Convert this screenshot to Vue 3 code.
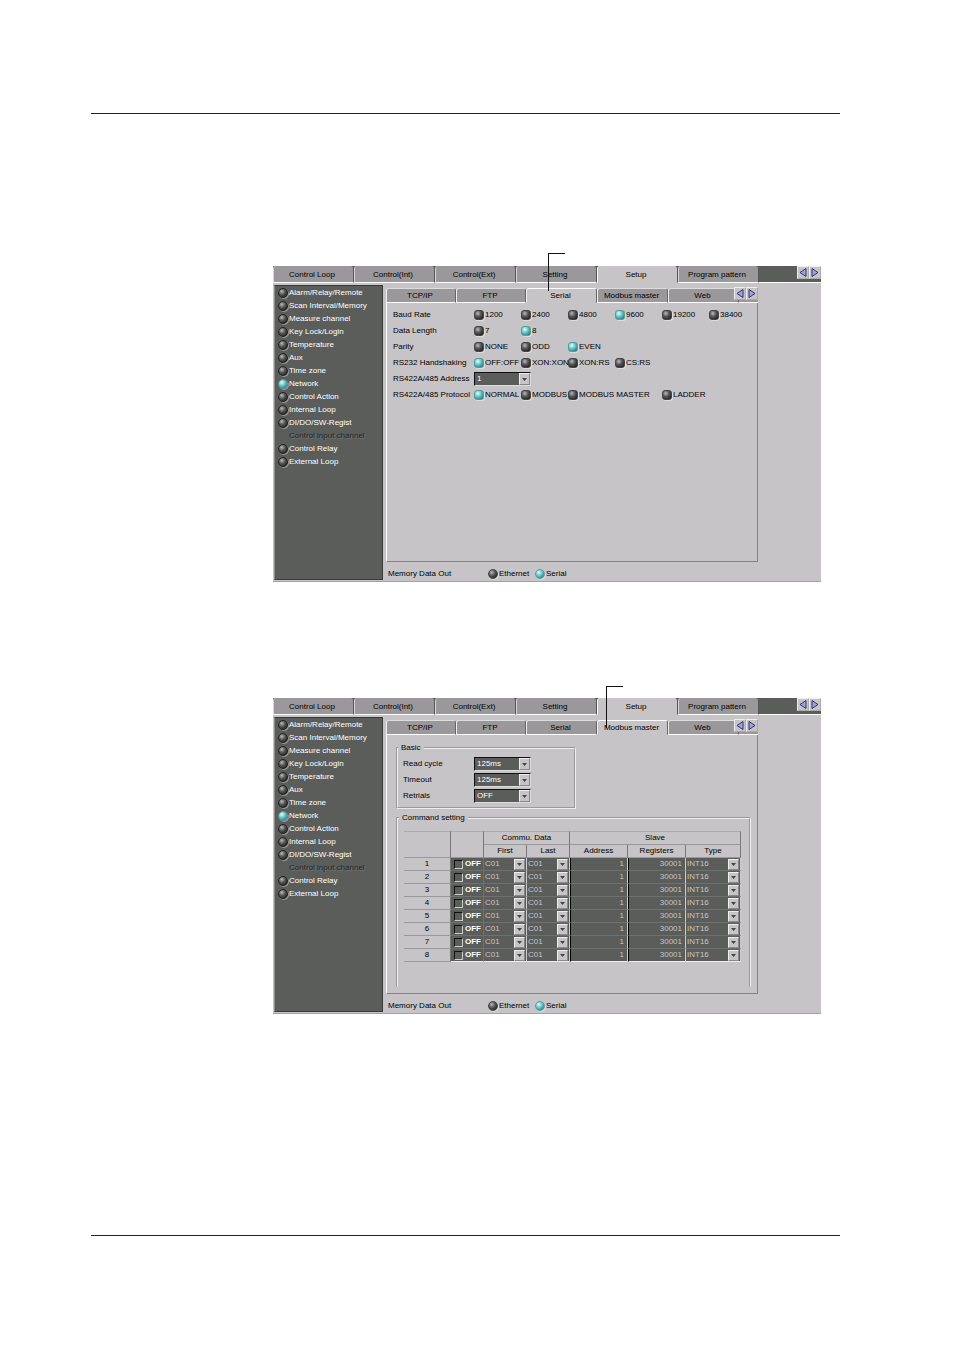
<script setup>
import { reactive } from 'vue';

const mainTabs = ['Control Loop', 'Control(Int)', 'Control(Ext)', 'Setting', 'Setup', 'Program pattern'];
const subTabs = ['TCP/IP', 'FTP', 'Serial', 'Modbus master', 'Web'];

const menu = [
  'Alarm/Relay/Remote',
  'Scan Interval/Memory',
  'Measure channel',
  'Key Lock/Login',
  'Temperature',
  'Aux',
  'Time zone',
  'Network',
  'Control Action',
  'Internal Loop',
  'DI/DO/SW-Regist',
  'Control input channel',
  'Control Relay',
  'External Loop',
];
const disabledItem = 'Control input channel';

const serialRows = [
  { key: 'baud', label: 'Baud Rate', options: ['1200', '2400', '4800', '9600', '19200', '38400'] },
  { key: 'length', label: 'Data Length', options: ['7', '8'] },
  { key: 'parity', label: 'Parity', options: ['NONE', 'ODD', 'EVEN'] },
  { key: 'handshake', label: 'RS232 Handshaking', options: ['OFF:OFF', 'XON:XON', 'XON:RS', 'CS:RS'] },
  { key: 'address', label: 'RS422A/485 Address', select: ['1', '2', '3', '4'] },
  { key: 'protocol', label: 'RS422A/485 Protocol', options: ['NORMAL', 'MODBUS', 'MODBUS MASTER', 'LADDER'] },
];

const serial = reactive({
  baud: '9600',
  length: '8',
  parity: 'EVEN',
  handshake: 'OFF:OFF',
  address: '1',
  protocol: 'NORMAL',
});

const basicRows = [
  { key: 'cycle', label: 'Read cycle', options: ['125ms', '250ms', '500ms'] },
  { key: 'timeout', label: 'Timeout', options: ['125ms', '250ms', '500ms'] },
  { key: 'retrials', label: 'Retrials', options: ['OFF', '1', '2'] },
];
const basic = reactive({ cycle: '125ms', timeout: '125ms', retrials: 'OFF' });

const commands = reactive(
  Array.from({ length: 8 }, (_, i) => ({
    no: i + 1, on: false, first: 'C01', last: 'C01', address: 1, register: 30001, type: 'INT16',
  }))
);

const screens = reactive([
  { id: 'a', tab: 'Setup', sub: 'Serial', item: 'Network', out: 'Serial' },
  { id: 'b', tab: 'Setup', sub: 'Modbus master', item: 'Network', out: 'Serial' },
]);
</script>

<template>
  <div class="page">
    <hr class="rule" />

    <main class="figures">
      <section v-for="s in screens" :key="s.id" class="window">
        <div class="callout" :class="'callout-' + s.id"></div>

        <nav class="main-tabs">
          <button
            v-for="t in mainTabs"
            :key="t"
            class="main-tab"
            :class="{ active: t === s.tab }"
            @click="s.tab = t"
          >{{ t }}</button>
          <div class="tabs-rest">
            <button class="arrow" aria-label="Previous">
              <svg viewBox="0 0 10 11"><path d="M8 1.5v8L2 5.5z" /></svg>
            </button>
            <button class="arrow" aria-label="Next">
              <svg viewBox="0 0 10 11"><path d="M2 1.5v8L8 5.5z" /></svg>
            </button>
          </div>
        </nav>

        <div class="body">
          <aside class="sidebar">
            <label
              v-for="m in menu"
              :key="m"
              class="item"
              :class="{ off: m === disabledItem }"
            >
              <input
                v-model="s.item"
                type="radio"
                class="led round"
                :name="'menu-' + s.id"
                :value="m"
                :disabled="m === disabledItem"
              />
              <span>{{ m }}</span>
            </label>
          </aside>

          <div class="content">
            <nav class="sub-tabs">
              <button
                v-for="t in subTabs"
                :key="t"
                class="sub-tab"
                :class="{ active: t === s.sub }"
                @click="s.sub = t"
              >{{ t }}</button>
              <span class="sub-rest"></span>
              <div class="sub-arrows">
                <button class="arrow" aria-label="Previous">
                  <svg viewBox="0 0 10 11"><path d="M8 1.5v8L2 5.5z" /></svg>
                </button>
                <button class="arrow" aria-label="Next">
                  <svg viewBox="0 0 10 11"><path d="M2 1.5v8L8 5.5z" /></svg>
                </button>
              </div>
            </nav>

            <div class="panel">
              <!-- Serial -->
              <div v-if="s.sub === 'Serial'" class="serial">
                <div v-for="r in serialRows" :key="r.key" class="row">
                  <label v-if="r.select" class="row-label" :for="r.key + s.id">{{ r.label }}</label>
                  <span v-else class="row-label">{{ r.label }}</span>
                  <div v-if="r.select" class="combo">
                    <select :id="r.key + s.id" v-model="serial[r.key]">
                      <option v-for="o in r.select" :key="o">{{ o }}</option>
                    </select>
                  </div>
                  <label
                    v-for="o in r.options"
                    :key="o"
                    class="option"
                    :class="{ wide: o === 'MODBUS MASTER' }"
                  >
                    <input v-model="serial[r.key]" type="radio" class="led" :name="r.key + s.id" :value="o" />
                    <span>{{ o }}</span>
                  </label>
                </div>
              </div>

              <!-- Modbus master -->
              <div v-else-if="s.sub === 'Modbus master'" class="modbus">
                <fieldset class="basic">
                  <legend>Basic</legend>
                  <div v-for="r in basicRows" :key="r.key" class="basic-row">
                    <label :for="r.key + s.id">{{ r.label }}</label>
                    <div class="combo">
                      <select :id="r.key + s.id" v-model="basic[r.key]">
                        <option v-for="o in r.options" :key="o">{{ o }}</option>
                      </select>
                    </div>
                  </div>
                </fieldset>

                <fieldset class="command">
                  <legend>Command setting</legend>
                  <table>
                    <colgroup>
                      <col class="c-no" /><col class="c-on" /><col class="c-data" /><col class="c-data" />
                      <col class="c-num" /><col class="c-num" /><col class="c-type" />
                    </colgroup>
                    <thead>
                      <tr class="head-top">
                        <th rowspan="2"></th>
                        <th rowspan="2"></th>
                        <th colspan="2">Commu. Data</th>
                        <th colspan="3">Slave</th>
                      </tr>
                      <tr>
                        <th>First</th>
                        <th>Last</th>
                        <th>Address</th>
                        <th>Registers</th>
                        <th>Type</th>
                      </tr>
                    </thead>
                    <tbody>
                      <tr v-for="c in commands" :key="c.no">
                        <th>{{ c.no }}</th>
                        <td>
                          <label class="switch">
                            <input v-model="c.on" type="checkbox" />
                            <span>{{ c.on ? 'ON' : 'OFF' }}</span>
                          </label>
                        </td>
                        <td>
                          <div class="combo flat">
                            <select v-model="c.first" aria-label="First" :disabled="!c.on"><option>C01</option></select>
                          </div>
                        </td>
                        <td>
                          <div class="combo flat">
                            <select v-model="c.last" aria-label="Last" :disabled="!c.on"><option>C01</option></select>
                          </div>
                        </td>
                        <td class="num">{{ c.address }}</td>
                        <td class="num">{{ c.register }}</td>
                        <td>
                          <div class="combo flat">
                            <select v-model="c.type" aria-label="Type" :disabled="!c.on"><option>INT16</option></select>
                          </div>
                        </td>
                      </tr>
                    </tbody>
                  </table>
                </fieldset>
              </div>
            </div>

            <div class="footer">
              <span class="footer-label">Memory Data Out</span>
              <label v-for="o in ['Ethernet', 'Serial']" :key="o" class="option">
                <input v-model="s.out" type="radio" class="led round" :name="'out-' + s.id" :value="o" />
                <span>{{ o }}</span>
              </label>
            </div>
          </div>
        </div>
      </section>
    </main>

    <hr class="rule" />
  </div>
</template>

<style>
body {
  margin: 0;
  background: #fff;
}
</style>

<style scoped>
.page {
  box-sizing: border-box;
  padding: 113px 114px 114px 91px;
  font-family: 'Liberation Sans', Arial, sans-serif;
  font-size: 8px;
  line-height: 10px;
  color: #000;
}
.page *,
.page *::before,
.page *::after {
  box-sizing: border-box;
}
button,
select {
  font: inherit;
  color: inherit;
  margin: 0;
  padding: 0;
}
.rule {
  height: 1px;
  margin: 0;
  border: 0;
  background: #222;
}
.figures {
  display: flex;
  flex-direction: column;
  gap: 116px;
  padding: 152px 19px 221px 182px;
}
.window {
  position: relative;
  background: #c6c4c7;
  white-space: nowrap;
}

/* leader line pointing at the open tab */
.callout {
  position: absolute;
  z-index: 2;
  border-top: 1px solid #111;
  border-left: 1px solid #111;
  pointer-events: none;
}
.callout-a {
  top: -13px;
  left: 275px;
  width: 17px;
  height: 38px;
}
.callout-b {
  top: -12px;
  left: 333px;
  width: 17px;
  height: 42px;
}

/* main tabs */
.main-tabs {
  display: flex;
  height: 17px;
  background: #5b5d5a;
}
.main-tab {
  flex: 0 0 81px;
  padding: 2px 3px 0 0;
  border: 0;
  border-left: 1px solid #d8d6d9;
  border-right: 1px solid #555;
  border-bottom: 1px solid #fff;
  border-radius: 3px 3px 0 0;
  background: #9a989b;
}
.main-tab.active {
  border-left-color: #fff;
  border-bottom-color: #c6c4c7;
  background: #c6c4c7;
}
.tabs-rest {
  flex: 1;
  display: flex;
  justify-content: flex-end;
  border-bottom: 1px solid #fff;
}
.arrow {
  width: 12px;
  height: 13px;
  border: 1px solid;
  border-color: #eee #aaa #aaa #eee;
  background: #c6c4c7;
}
.arrow svg {
  display: block;
  width: 10px;
  height: 11px;
  fill: #9fa3e0;
  stroke: #33336a;
  stroke-width: 1;
}

.body {
  display: flex;
  gap: 3px;
  padding: 0 0 1px 1px;
  border-bottom: 1px solid #a3a1a4;
}

/* sidebar */
.sidebar {
  flex: 0 0 109px;
  margin-top: 2px;
  border: 1px solid;
  border-color: #3a3b39 #3a3b39 #3a3b39 #8c8c8c;
  padding: 0 0 1px 3px;
  background: #5b5d5a;
  color: #fff;
}
.item {
  display: flex;
  align-items: center;
  gap: 1px;
  height: 13px;
}
.item.off {
  color: #222;
  text-shadow: 1px 1px 0 #777;
}
.item.off .led {
  visibility: hidden;
}

/* lamp-shaped radio */
.led {
  appearance: none;
  flex: none;
  width: 10px;
  height: 10px;
  margin: 0;
  border: 1px solid #444;
  border-radius: 3px;
  background: radial-gradient(circle at 35% 30%, #bbb 0, #5a5a5a 40%, #1c1c1c 90%);
  box-shadow: 1px 1px 0 #ddd;
}
.led.round {
  border-radius: 50%;
}
.led:checked {
  border-color: #5a9a9c;
  background: radial-gradient(circle at 35% 30%, #e4ffff 0, #63c3c4 45%, #1f6f72 95%);
}
.sidebar .led {
  border-color: #222;
  box-shadow: 1px 1px 0 #999;
}
.sidebar .led:checked {
  border-color: #5a9a9c;
}

/* sub tabs and panel */
.content {
  flex: 1;
  min-width: 0;
  padding-top: 5px;
}
.sub-tabs {
  position: relative;
  display: flex;
  height: 15px;
  margin-right: 63px;
}
.sub-tab {
  flex: 0 0 70px;
  padding-right: 2px;
  border: 0;
  border-top: 1px solid #dedcdf;
  border-left: 1px solid #eee;
  border-right: 1px solid #666;
  border-bottom: 1px solid #fff;
  border-radius: 3px 3px 0 0;
  background: #9a989b;
}
.sub-tab:nth-child(n + 3) {
  flex-basis: 71px;
}
.sub-tab.active {
  border-top-color: #fff;
  border-bottom-color: #c6c4c7;
  background: #c6c4c7;
}
.sub-rest {
  flex: 1;
  border-bottom: 1px solid #fff;
  background: #9a989b;
}
.sub-arrows {
  position: absolute;
  top: -1px;
  right: 0;
  display: flex;
}
.panel {
  min-height: 259px;
  margin-right: 63px;
  border: 1px solid;
  border-color: transparent #858386 #858386 #fff;
  border-top: 0;
}

.serial {
  padding: 4px 0 0 6px;
}
.row {
  display: grid;
  grid-template-columns: 81px repeat(6, 47px);
  align-items: center;
  height: 16px;
}
.option {
  display: flex;
  align-items: center;
  gap: 1px;
}
.option.wide {
  grid-column: span 2;
}

/* drop-down */
.combo {
  position: relative;
  width: 57px;
  height: 14px;
}
.combo select {
  appearance: none;
  display: block;
  width: 100%;
  height: 100%;
  padding: 0 12px 0 2px;
  border: 1px solid;
  border-color: #111 #ddd #ddd #111;
  border-radius: 0;
  background: #5b5d5a;
  color: #fff;
}
.combo::before {
  content: '';
  position: absolute;
  top: 1px;
  right: 1px;
  width: 11px;
  height: 12px;
  background: #c6c4c7;
  border: 1px solid;
  border-color: #eee #888 #888 #eee;
  pointer-events: none;
}
.combo::after {
  content: '';
  position: absolute;
  top: 6px;
  right: 4px;
  width: 5px;
  height: 3px;
  background: #444;
  clip-path: polygon(0 0, 100% 0, 50% 100%);
  pointer-events: none;
}
.combo.flat {
  width: 100%;
  height: 12px;
}
.combo.flat select {
  padding-left: 1px;
  border: 0;
  color: #c6c4c7;
  opacity: 1;
}
.combo.flat::before {
  top: 1px;
  height: 11px;
}
.combo.flat::after {
  top: 5px;
}

/* modbus */
.modbus {
  display: flex;
  flex-direction: column;
  gap: 4px;
  padding: 8px 6px 0 9px;
}
fieldset {
  min-width: 0;
  margin: 0;
  border: 2px groove #eee;
}
legend {
  margin-left: -5px;
  padding: 0 3px;
}
.basic {
  width: 180px;
  padding: 3px 5px;
}
.basic-row {
  display: grid;
  grid-template-columns: 71px 57px;
  align-items: center;
  height: 16px;
}
.command {
  padding: 8px 6px 25px;
  border-bottom: 0;
}
table {
  width: 337px;
  table-layout: fixed;
  border-collapse: separate;
  border-spacing: 0;
}
.c-no { width: 47px; }
.c-on { width: 33px; }
.c-data { width: 43px; }
.c-num { width: 58px; }
.c-type { width: 55px; }
tr {
  height: 13px;
}
.head-top {
  height: 14px;
}
th {
  padding: 0;
  font-weight: 400;
  border-right: 1px solid #777;
  border-bottom: 1px solid #999;
}
thead th {
  border-top: 1px solid #aaa;
}
thead tr:last-child th {
  border-top: 0;
}
td {
  height: 13px;
  padding: 0;
  border-right: 1px solid #ccc;
  border-bottom: 1px solid #6f716e;
  background: #5b5d5a;
  color: #c6c4c7;
}
td:nth-child(2) {
  border-right-color: #6f716e;
}
tbody tr:last-child td {
  border-bottom-color: #eee;
}
.num {
  padding-right: 3px;
  border-left: 1px solid #000;
  text-align: right;
}
.switch {
  display: flex;
  align-items: center;
  gap: 2px;
  height: 12px;
  padding-left: 3px;
  font-weight: 700;
  color: #fff;
}
.switch input {
  appearance: none;
  flex: none;
  width: 9px;
  height: 9px;
  margin: 0;
  border: 1px solid;
  border-color: #111 #ccc #ccc #111;
}
.switch input:checked {
  background: #63c3c4;
}

/* footer */
.footer {
  display: grid;
  grid-template-columns: 100px 47px 47px;
  align-items: center;
  min-height: 18px;
  padding: 6px 0 0 2px;
}
</style>
